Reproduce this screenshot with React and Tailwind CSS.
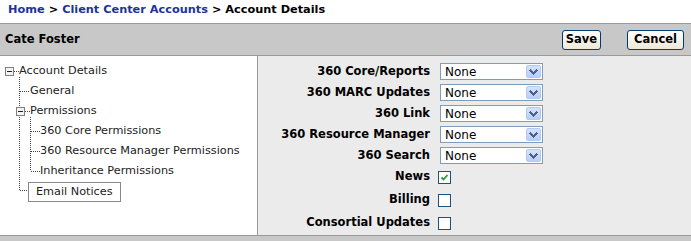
const selects = ["360 Core/Reports", "360 MARC Updates", "360 Link", "360 Resource Manager", "360 Search"];

const checks = [
  { label: "News", checked: true },
  { label: "Billing", checked: false },
  { label: "Consortial Updates", checked: false },
];

const MinusBox = ({ x, y }) => (
  <g>
    <rect x={x + 0.5} y={y + 0.5} width="8" height="8" fill="#f4f4f4" stroke="#7f7f7f" />
    <line x1={x + 2} y1={y + 4.5} x2={x + 7} y2={y + 4.5} stroke="#222" />
  </g>
);

const TreeLines = () => (
  <svg className="absolute left-0 top-0" width="60" height="150" shapeRendering="crispEdges">
    <g stroke="#444" strokeDasharray="1 1" fill="none">
      <line x1="14" y1="15.5" x2="19" y2="15.5" />
      <line x1="19.5" y1="21" x2="19.5" y2="135" />
      <line x1="20" y1="35.5" x2="30" y2="35.5" />
      <line x1="25" y1="55.5" x2="30" y2="55.5" />
      <line x1="30.5" y1="61" x2="30.5" y2="115" />
      <line x1="31" y1="75.5" x2="40" y2="75.5" />
      <line x1="31" y1="95.5" x2="40" y2="95.5" />
      <line x1="31" y1="115.5" x2="40" y2="115.5" />
      <line x1="20" y1="134.5" x2="28" y2="134.5" />
    </g>
    <MinusBox x={5} y={11} />
    <MinusBox x={16} y={51} />
  </svg>
);

const Select = () => (
  <div className="flex h-[17px] w-[103px] items-center justify-between border border-[#7f9db9] bg-white pl-[4px] pr-[1px]">
    <span className="text-[12px] leading-none text-black">None</span>
    <span className="flex h-[13px] w-[15px] items-center justify-center rounded-[2px] border border-[#b4c8f2] bg-gradient-to-b from-[#d6e2fd] to-[#b8cdf8]">
      <svg width="9" height="6" viewBox="0 0 9 6" shapeRendering="crispEdges">
        <path d="M1 1 L4.5 4.5 L8 1" stroke="#4d6185" strokeWidth="2" fill="none" />
      </svg>
    </span>
  </div>
);

const Checkbox = ({ checked }) => (
  <span className="flex h-[13px] w-[13px] items-center justify-center border border-[#1c5180] bg-white">
    {checked && (
      <svg width="9" height="9" viewBox="0 0 9 9">
        <path d="M1.5 4.5 L3.5 6.5 L7.5 2" stroke="#21a121" strokeWidth="1.8" fill="none" />
      </svg>
    )}
  </span>
);

const Button = ({ children, width }) => (
  <button className={`h-[20px] rounded-[3px] border border-[#003c74] bg-gradient-to-b from-white to-[#ece9d8] text-[11.5px] font-bold leading-none text-black ${width}`}>
    {children}
  </button>
);

export default function App() {
  return (
    <div className="flex h-[241px] w-[691px] flex-col overflow-hidden bg-white font-['DejaVu_Sans',Verdana,sans-serif] text-black">
      <div className="flex h-[23px] shrink-0 items-start pl-[8px] pt-[2px] text-[11.3px] font-bold">
        <span className="text-[#1c3399]">Home</span>
        <span className="mx-[4px]">&gt;</span>
        <span className="text-[#1c3399]">Client Center Accounts</span>
        <span className="mx-[4px]">&gt;</span>
        <span>Account Details</span>
      </div>

      <div className="flex h-[33px] shrink-0 items-center justify-between border-y border-[#999] bg-[#c8c8c8] pl-[5px] pr-[7px]">
        <span className="text-[11.5px] font-bold">Cate Foster</span>
        <div className="flex gap-[26px]">
          <Button width="w-[39px]">Save</Button>
          <Button width="w-[57px]">Cancel</Button>
        </div>
      </div>

      <div className="flex min-h-0 flex-1 overflow-hidden">
        <div className="relative w-[258px] border-r border-[#999] bg-white pt-[5px] text-[11.25px] text-[#222]">
          <TreeLines />
          <div className="flex h-[20px] items-center pl-[19px]">Account Details</div>
          <div className="flex h-[20px] items-center pl-[30px]">General</div>
          <div className="flex h-[20px] items-center pl-[30px]">Permissions</div>
          <div className="flex h-[20px] items-center pl-[40px]">360 Core Permissions</div>
          <div className="flex h-[20px] items-center pl-[40px]">360 Resource Manager Permissions</div>
          <div className="flex h-[20px] items-center pl-[40px]">Inheritance Permissions</div>
          <div className="flex pl-[28px] pt-[1px]">
            <span className="flex h-[20px] items-center border border-[#888] bg-white px-[7px]">Email Notices</span>
          </div>
        </div>

        <div className="flex-1 bg-[#ebebeb] pt-[7px]">
          {selects.map((label) => (
            <div key={label} className="flex h-[21px] items-start">
              <span className="w-[172px] text-right text-[11.5px] font-bold leading-[16px]">{label}</span>
              <span className="ml-[10px]">
                <Select />
              </span>
            </div>
          ))}
          {checks.map((c) => (
            <div key={c.label} className="flex h-[23px] items-start pt-[1px]">
              <span className="w-[172px] text-right text-[11.5px] font-bold leading-[14px]">{c.label}</span>
              <span className="ml-[8px] pt-[2px]">
                <Checkbox checked={c.checked} />
              </span>
            </div>
          ))}
        </div>
      </div>

      <div className="h-[6px] shrink-0 border-t border-[#999] bg-[#c8c8c8]" />
    </div>
  );
}
